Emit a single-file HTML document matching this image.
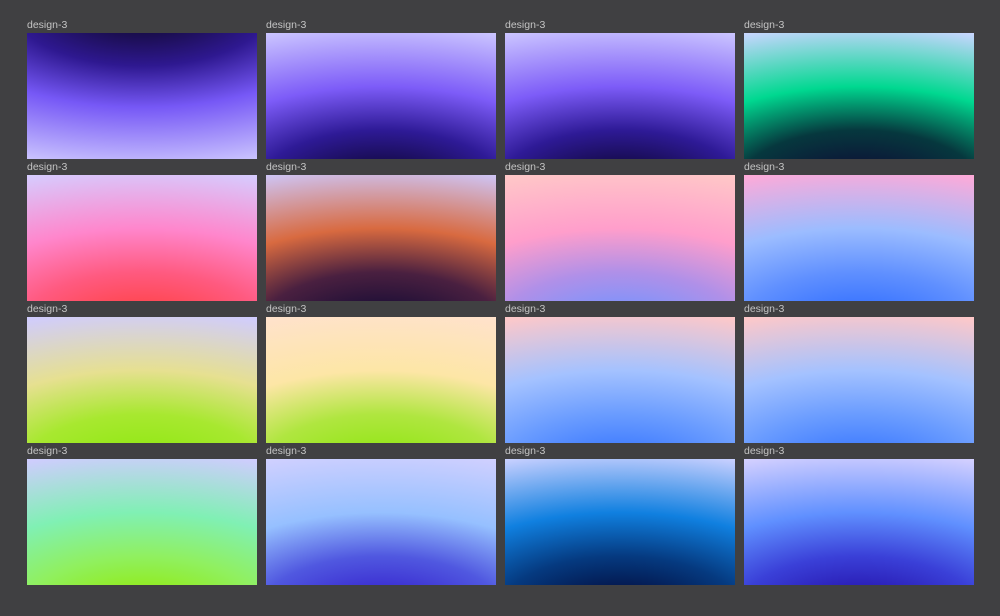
<!DOCTYPE html>
<html><head><style>
body{margin:0;width:1000px;height:616px;background:#404042;position:relative;overflow:hidden;font-family:"Liberation Sans",sans-serif}
.t{position:absolute;width:230px;height:126px}
.l{position:absolute;font-size:10.5px;color:#c4c4c4;top:-14px;left:0;white-space:nowrap}
.g{position:absolute;inset:0}
</style></head><body>
<div id="c"></div>
<script>
const cols=[27,266,505,744],rows=[33,175,317,459];
const R=(b,m,t,m2)=>`radial-gradient(ellipse 170% 150% at 50% 125%, ${b} 8%, ${m2?m2+' 32%, ':''}${m} 55%, ${t} 88%)`;
const g=[
`radial-gradient(ellipse 170% 150% at 50% -25%, #140a3a 12%, #2e1890 34%, #7658f6 56%, #c9c2fe 88%)`,
R('#0e0634','#7d5cf8','#cbc5ff','#2e1a96'),
R('#0e0634','#7d5cf8','#cbc5ff','#2e1a96'),
R('#0e0c35','#00d890','#c8d6ff','#06383e'),
R('#ff4040','#ff86cc','#d6ccff','#ff5a80'),
R('#120a34','#d86a40','#cec4f4','#4a2040'),
R('#7294ff','#ff9ecb','#ffc8c8','#b090e8'),
R('#2e6cff','#9bbcff','#ffaad8','#6090ff'),
R('#8ee810','#e6e090','#d0ccff','#a8e830'),
R('#8ee610','#fde6a6','#ffe2cc','#b0e640'),
R('#3574ff','#a4c2ff','#ffc8c8','#6a9cff'),
R('#3574ff','#a4c2ff','#ffc8c8','#6a9cff'),
R('#92ea08','#80f0b4','#d0ccff','#90f060'),
R('#3420cc','#96c0ff','#d0d0ff','#5058e0'),
R('#030a3a','#1080e0','#c8d0ff','#053a80'),
R('#2410a8','#6090ff','#d4d0ff','#3a40d8')];
let h='';
rows.forEach((y,i)=>cols.forEach((x,j)=>{h+=`<div class="t" style="left:${x}px;top:${y}px"><div class="l">design-3</div><div class="g" style="background:${g[i*4+j]}"></div></div>`}));
document.getElementById('c').innerHTML=h;
</script>
</body></html>
